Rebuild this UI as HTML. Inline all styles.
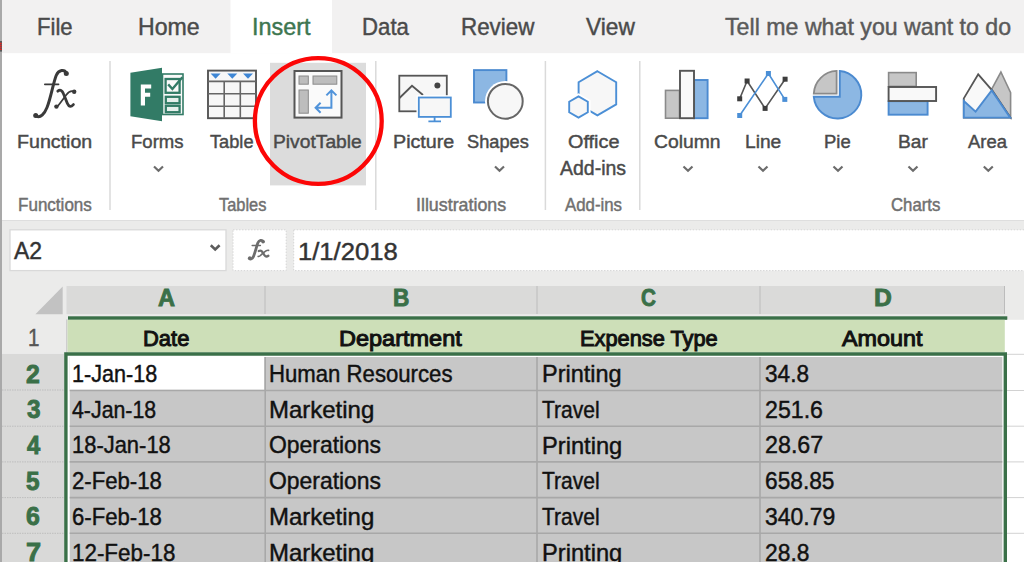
<!DOCTYPE html>
<html><head><meta charset="utf-8"><title>Excel Insert PivotTable</title>
<style>
html,body{margin:0;padding:0}
body{width:1024px;height:562px;overflow:hidden;position:relative;background:#fff;font-family:"Liberation Sans",sans-serif}
.a{position:absolute}
.t{position:absolute;white-space:nowrap;line-height:1;transform-origin:0 0;font-family:"Liberation Sans",sans-serif;-webkit-text-stroke:0.45px currentColor}
svg{position:absolute;left:0;top:0}
</style></head><body>
<svg width="1024" height="562" viewBox="0 0 1024 562">
  <!-- tab bar -->
  <rect x="0" y="0" width="1024" height="53.4" fill="#f2f1f1"/>
  <rect x="230.5" y="0" width="101.5" height="53.4" fill="#ffffff"/>
  <!-- ribbon -->
  <rect x="0" y="53.4" width="1024" height="166.6" fill="#ffffff"/>
  <rect x="270" y="62.8" width="96" height="122.6" fill="#dcdcdc"/>
  <g stroke="#dadada" stroke-width="1.5">
    <line x1="110" y1="61" x2="110" y2="210"/>
    <line x1="375.8" y1="61" x2="375.8" y2="210"/>
    <line x1="545.4" y1="61" x2="545.4" y2="210"/>
    <line x1="639.8" y1="61" x2="639.8" y2="210"/>
  </g>
  <!-- formula bar area -->
  <rect x="0" y="220" width="1024" height="100" fill="#ebebea"/>
  <line x1="0" y1="220.5" x2="1024" y2="220.5" stroke="#dedede" stroke-width="1"/>
  <rect x="10" y="229.8" width="216" height="40.8" fill="#fff" stroke="#d9d9d9" stroke-width="1.3"/>
  <rect x="233" y="229.8" width="53.2" height="40.8" fill="#fff" stroke="#d6d6d6" stroke-width="1" stroke-dasharray="1.5 1.5"/>
  <rect x="293.7" y="229.8" width="740" height="40.8" fill="#fff" stroke="#d6d6d6" stroke-width="1" stroke-dasharray="1.5 1.5"/>
  <path d="M210.8,245.3 L215.2,249.4 L219.6,245.3" fill="none" stroke="#5c5c5c" stroke-width="2.6"/>
  <!-- column headers -->
  <rect x="66.5" y="286" width="938" height="28.2" fill="#dadad9"/>
  <g stroke="#bcbcbc" stroke-width="1">
    <line x1="265" y1="286" x2="265" y2="314"/>
    <line x1="537" y1="286" x2="537" y2="314"/>
    <line x1="760" y1="286" x2="760" y2="314"/>
    <line x1="1004.5" y1="286" x2="1004.5" y2="314"/>
  </g>
  <polygon points="62.7,286.4 62.7,314.2 35.4,314.2" fill="#c2c2c2"/>
  <rect x="68" y="316.3" width="939.3" height="3.5" fill="#3a7048"/>
  <!-- row headers -->
  <rect x="0" y="319.5" width="66.5" height="34.4" fill="#ebebea"/>
  <rect x="0" y="353.9" width="64.3" height="210" fill="#d9d9d8"/>
  <g stroke="#bdbdbd" stroke-width="1" stroke-dasharray="1.5 1">
    <line x1="2" y1="390" x2="64" y2="390"/>
    <line x1="2" y1="426.2" x2="64" y2="426.2"/>
    <line x1="2" y1="461.9" x2="64" y2="461.9"/>
    <line x1="2" y1="497.6" x2="64" y2="497.6"/>
    <line x1="2" y1="533.3" x2="64" y2="533.3"/>
  </g>
  <line x1="66.9" y1="319.5" x2="66.9" y2="353" stroke="#b5b5b5" stroke-width="1"/>
  <!-- grid -->
  <rect x="67.5" y="319.8" width="937.3" height="32.4" fill="#cddfb8"/>
  <rect x="1007" y="319.8" width="17" height="243" fill="#fff"/>
  <g stroke="#d2d2d2" stroke-width="1">
    <line x1="1007" y1="354.3" x2="1024" y2="354.3"/>
    <line x1="1007" y1="390.5" x2="1024" y2="390.5"/>
    <line x1="1007" y1="426.2" x2="1024" y2="426.2"/>
    <line x1="1007" y1="461.9" x2="1024" y2="461.9"/>
    <line x1="1007" y1="497.6" x2="1024" y2="497.6"/>
    <line x1="1007" y1="533.3" x2="1024" y2="533.3"/>
  </g>
  <rect x="67.6" y="355.8" width="935" height="210" fill="#fff"/>
  <rect x="69.7" y="357" width="932.6" height="210" fill="#c7c7c7"/>
  <rect x="69.7" y="357" width="194.6" height="32.8" fill="#fff"/>
  <g stroke="#a8a8a8" stroke-width="1.6">
    <line x1="265.2" y1="357" x2="265.2" y2="562"/>
    <line x1="537" y1="357" x2="537" y2="562"/>
    <line x1="760" y1="357" x2="760" y2="562"/>
    <line x1="69.7" y1="390.5" x2="1002.3" y2="390.5"/>
    <line x1="69.7" y1="426.2" x2="1002.3" y2="426.2"/>
    <line x1="69.7" y1="461.9" x2="1002.3" y2="461.9"/>
    <line x1="69.7" y1="497.6" x2="1002.3" y2="497.6"/>
    <line x1="69.7" y1="533.3" x2="1002.3" y2="533.3"/>
  </g>
  <path d="M65.9,570 V354 H1005.3 V570" fill="none" stroke="#3a7048" stroke-width="3.4"/>
  <!-- left border -->
  <rect x="0" y="0" width="2" height="562" fill="#a9a9a9"/>
  <rect x="0" y="41" width="2" height="10.6" fill="#5a5a5a"/><g fill="#f02020"><rect x="0" y="42.8" width="1.6" height="1.2"/><rect x="0" y="44.8" width="1.6" height="1.2"/><rect x="0" y="46.8" width="1.6" height="1.2"/><rect x="0" y="48.8" width="1.6" height="1.2"/></g>

  <!-- ===== ICONS ===== -->
  <!-- Forms -->
  <g>
    <polygon points="130.4,72.8 162,67.8 162,121.2 130.4,116.2" fill="#327b66"/>
    <path d="M140.8,84.4 H151.2 V88.4 H145 V92.8 H150.2 V96.8 H145 V105.4 H140.8 Z" fill="#fff"/>
    <rect x="162.5" y="74" width="20.5" height="40.5" fill="#fafafa" stroke="#327b66" stroke-width="1.6"/>
    <rect x="165.6" y="79" width="14" height="13.8" fill="#fafafa" stroke="#327b66" stroke-width="2.3"/>
    <path d="M168.2,84.4 L172.4,89 L182.4,77.2" fill="none" stroke="#327b66" stroke-width="2.4"/>
    <rect x="165.8" y="96.8" width="13.8" height="6.4" fill="#e6efec" stroke="#327b66" stroke-width="2.3"/>
    <rect x="165.8" y="105.8" width="13.8" height="6.4" fill="#e6efec" stroke="#327b66" stroke-width="2.3"/>
  </g>
  <!-- Table -->
  <g>
    <rect x="208" y="70.6" width="48" height="47.6" fill="#f7f7f7" stroke="#555" stroke-width="1.9"/>
    <g stroke="#666" stroke-width="1.6">
      <line x1="208" y1="81.4" x2="256" y2="81.4"/>
      <line x1="208" y1="93.8" x2="256" y2="93.8"/>
      <line x1="208" y1="106.3" x2="256" y2="106.3"/>
      <line x1="224.2" y1="81.4" x2="224.2" y2="118"/>
      <line x1="240.3" y1="81.4" x2="240.3" y2="118"/>
    </g>
    <g fill="#3e86d4">
      <polygon points="210.6,73.6 220.6,73.6 215.6,78.8"/>
      <polygon points="227.3,73.6 237.3,73.6 232.3,78.8"/>
      <polygon points="243,73.6 253,73.6 248,78.8"/>
    </g>
  </g>
  <!-- PivotTable -->
  <g>
    <rect x="294.5" y="71" width="47" height="46.6" fill="#fafafa" stroke="#555" stroke-width="2"/>
    <rect x="299" y="76" width="9.3" height="8.2" fill="#bdbdbd" stroke="#8a8a8a" stroke-width="1"/>
    <rect x="313" y="76" width="23.8" height="8.2" fill="#bdbdbd" stroke="#8a8a8a" stroke-width="1"/>
    <rect x="299" y="90" width="9.3" height="23.2" fill="#bdbdbd" stroke="#8a8a8a" stroke-width="1"/>
    <path d="M315.6,107.8 H331.4 V90.4 M320.6,102.8 L315.6,107.8 L320.6,112.8 M326.4,95.4 L331.4,90.4 L336.4,95.4" fill="none" stroke="#5093da" stroke-width="2"/>
  </g>
  <!-- Picture -->
  <g>
    <rect x="399.3" y="75.7" width="47.5" height="35.6" fill="#f7f7f7" stroke="#555" stroke-width="1.8"/>
    <polyline points="399.5,98 412,85.8 423,95" fill="none" stroke="#555" stroke-width="1.8"/>
    <circle cx="437.4" cy="85.6" r="3" fill="#444"/>
    <rect x="416.5" y="95.2" width="36.6" height="24" fill="#fff"/>
    <rect x="418.8" y="97.5" width="32" height="19.4" fill="#f7f7f7" stroke="#4b8fd6" stroke-width="1.8"/>
    <path d="M434.6,117 V121.3 M428.4,121.3 H441" fill="none" stroke="#4b8fd6" stroke-width="1.8"/>
  </g>
  <!-- Shapes -->
  <g>
    <rect x="474" y="70.1" width="32.4" height="32.4" fill="#8cb7e3" stroke="#4b8ad0" stroke-width="1.9"/>
    <circle cx="505.3" cy="101.3" r="20.3" fill="#fff"/>
    <circle cx="505.3" cy="101.3" r="17.4" fill="#f7f7f7" stroke="#666" stroke-width="2"/>
  </g>
  <!-- Office Add-ins -->
  <g>
    <polygon points="597.4,71.2 616.2,82.2 616.2,104.4 597.4,115.4 578.6,104.4 578.6,82.2" fill="#f7f7f7" stroke="#4b8fd6" stroke-width="1.9"/>
    <polygon points="578.5,93.2 590.6,100.2 590.6,113.8 578.5,120.8 566.4,113.8 566.4,100.2" fill="#fff"/>
    <polygon points="578.5,96.4 587.8,101.8 587.8,112.2 578.5,117.6 569.2,112.2 569.2,101.8" fill="#f7f7f7" stroke="#4b8fd6" stroke-width="1.9"/>
  </g>
  <!-- Column -->
  <g>
    <rect x="665.5" y="90.4" width="14" height="27.8" fill="#c6c6c6" stroke="#8a8a8a" stroke-width="1.6"/>
    <rect x="694.1" y="80" width="13.5" height="38.2" fill="#8cb7e3" stroke="#4b8ad0" stroke-width="1.9"/>
    <rect x="680" y="70.8" width="14" height="47.4" fill="#f9f9f9" stroke="#555" stroke-width="1.9"/>
  </g>
  <!-- Line -->
  <g>
    <polyline points="739.7,98.8 747.1,81 765.1,108.4 785.1,79.2" fill="none" stroke="#555" stroke-width="1.6"/>
    <g fill="#3d3d3d">
      <rect x="737.2" y="96.3" width="5" height="5"/><rect x="744.6" y="78.5" width="5" height="5"/>
      <rect x="762.6" y="105.9" width="5" height="5"/><rect x="782.6" y="76.7" width="5" height="5"/>
    </g>
    <polyline points="739.7,115.5 768.4,73.5 784.8,99.4" fill="none" stroke="#4b8fd6" stroke-width="1.6"/>
    <g fill="#4b8fd6">
      <rect x="737.2" y="113" width="5" height="5"/><rect x="765.9" y="71" width="5" height="5"/><rect x="782.3" y="96.9" width="5" height="5"/>
    </g>
  </g>
  <!-- Pie -->
  <g>
    <path d="M836.6,93.6 L813.8,93.6 A23.8,23.8 0 0 1 836.6,70.9 Z" fill="#c6c6c6" stroke="#8a8a8a" stroke-width="1.8"/>
    <path d="M839.8,96.8 L839.8,71 A23.8,23.8 0 1 1 813.8,96.8 Z" fill="#8cb7e3" stroke="#4b8ad0" stroke-width="1.9"/>
  </g>
  <!-- Bar -->
  <g>
    <rect x="888.6" y="72.6" width="27.6" height="13.8" fill="#c6c6c6" stroke="#8a8a8a" stroke-width="1.6"/>
    <rect x="888.6" y="101.2" width="39" height="13.5" fill="#8cb7e3" stroke="#4b8ad0" stroke-width="1.9"/>
    <rect x="888.6" y="87" width="47.5" height="14" fill="#f9f9f9" stroke="#555" stroke-width="1.9"/>
  </g>
  <!-- Area -->
  <g>
    <polygon points="991.7,89.2 1000.9,72 1010.6,92.7 1010.6,117.6" fill="#c6c6c6" stroke="#8a8a8a" stroke-width="1.6"/>
    <polygon points="963.8,117.6 963.8,98.4 978.2,74.3 991.7,89.9 1010.4,117.6" fill="#f9f9f9" stroke="#555" stroke-width="1.8"/>
    <polygon points="963.8,101 975.6,111.6 991.7,90.4 1010.2,117.6 963.8,117.6" fill="#8cb7e3" stroke="#4b8ad0" stroke-width="1.9"/>
  </g>
  <!-- chevrons -->
  <g fill="none" stroke="#6c6c6c" stroke-width="2.2">
    <path d="M154.0,166.5 L158.5,170.7 L163.0,166.5"/>
    <path d="M495.0,166.5 L499.5,170.7 L504.0,166.5"/>
    <path d="M683.5,166.5 L688.0,170.7 L692.5,166.5"/>
    <path d="M758.5,166.5 L763.0,170.7 L767.5,166.5"/>
    <path d="M833.5,166.5 L838.0,170.7 L842.5,166.5"/>
    <path d="M908.5,166.5 L913.0,170.7 L917.5,166.5"/>
    <path d="M983.8,166.5 L988.3,170.7 L992.8,166.5"/>
  </g>
  <!-- red circle -->
  <ellipse cx="318.3" cy="121" rx="63.4" ry="62.9" fill="none" stroke="#fc0606" stroke-width="4.3"/>
</svg>
<svg width="1024" height="562" viewBox="0 0 1024 562" style="position:absolute;left:0;top:0">
  <g fill="none" stroke="#3a3a3a" stroke-linecap="round">
    <path d="M66.4,73 C64.5,69.2 58.8,69.4 56.2,75.5 C53.2,83 50.6,99 47,107.5 C44.6,113.5 40.6,118.2 36.4,116.2" stroke-width="3"/>
    <line x1="44.8" y1="84.4" x2="58.6" y2="84.4" stroke-width="1.6"/>
    <path d="M57.8,91.2 C60.2,89.2 62.2,90.2 63.6,94 L67.4,103.6 C68.9,107.2 71.2,107 73.4,104.6" stroke-width="2.8"/>
    <path d="M73.8,91.6 C71.2,90.4 69.2,91.2 66.2,95 L60.2,103 C58.4,105.6 57.2,106.8 56,106.8" stroke-width="1.7"/>
  </g>
  <g fill="#3a3a3a">
    <circle cx="66.3" cy="73.6" r="2.5"/><circle cx="35.7" cy="115.6" r="2.5"/>
    <circle cx="74.2" cy="91.8" r="2.2"/><circle cx="56.4" cy="106.6" r="2.2"/>
  </g>
</svg>
<svg width="1024" height="562" viewBox="0 0 1024 562" style="position:absolute;left:0;top:0">
  <g fill="none" stroke="#6c6c6c" stroke-linecap="round">
    <path d="M263.4,241.6 C262,239.6 259,240 257.8,243 C256.4,247 255,253 253.4,256.6 C252.4,258.8 250.6,259.6 249.2,258.4" stroke-width="2.8"/>
    <line x1="252.2" y1="245.6" x2="260.4" y2="245.6" stroke-width="1.5"/>
    <path d="M258.8,251 C260.4,250.2 261.6,250.6 262.6,252.4 L264.6,255.4 C265.6,256.8 267,256.8 268.4,255.8" stroke-width="2.3"/>
    <path d="M268.6,250.4 C267,250 266,250.6 264.2,252.2 L260.8,255.2 C259.8,256.2 258.8,256.6 258.2,256.4" stroke-width="1.6"/>
  </g>
  <g fill="#6c6c6c"><circle cx="263" cy="241.8" r="1.7"/><circle cx="249.8" cy="258" r="1.7"/></g>
</svg>
<span class="t" style="left:37.0px;top:15.3px;font-size:23.84px;color:#4a4a4a;transform:scaleX(0.926)">File</span>
<span class="t" style="left:137.9px;top:15.3px;font-size:23.84px;color:#4a4a4a;transform:scaleX(0.970)">Home</span>
<span class="t" style="left:251.6px;top:15.3px;font-size:23.84px;color:#3d7650;transform:scaleX(0.982)">Insert</span>
<span class="t" style="left:362.0px;top:15.3px;font-size:23.84px;color:#4a4a4a;transform:scaleX(0.932)">Data</span>
<span class="t" style="left:460.5px;top:15.3px;font-size:23.84px;color:#4a4a4a;transform:scaleX(0.939)">Review</span>
<span class="t" style="left:585.7px;top:15.3px;font-size:23.84px;color:#4a4a4a;transform:scaleX(0.953)">View</span>
<span class="t" style="left:724.8px;top:15.3px;font-size:23.84px;color:#5a5a5a;transform:scaleX(0.973)">Tell me what you want to do</span>
<span class="t" style="left:17.2px;top:131.8px;font-size:19.19px;color:#4a4a4a;transform:scaleX(1.022)">Function</span>
<span class="t" style="left:130.7px;top:131.8px;font-size:19.19px;color:#4a4a4a;transform:scaleX(0.967)">Forms</span>
<span class="t" style="left:210.4px;top:131.8px;font-size:19.19px;color:#4a4a4a;transform:scaleX(0.949)">Table</span>
<span class="t" style="left:273.2px;top:131.8px;font-size:19.19px;color:#4a4a4a;transform:scaleX(1.003)">PivotTable</span>
<span class="t" style="left:392.7px;top:131.8px;font-size:19.19px;color:#4a4a4a;transform:scaleX(1.027)">Picture</span>
<span class="t" style="left:467.0px;top:131.8px;font-size:19.19px;color:#4a4a4a;transform:scaleX(0.949)">Shapes</span>
<span class="t" style="left:567.5px;top:131.8px;font-size:19.19px;color:#4a4a4a;transform:scaleX(1.035)">Office</span>
<span class="t" style="left:653.8px;top:131.8px;font-size:19.19px;color:#4a4a4a;transform:scaleX(1.007)">Column</span>
<span class="t" style="left:744.7px;top:131.8px;font-size:19.19px;color:#4a4a4a;transform:scaleX(0.999)">Line</span>
<span class="t" style="left:823.7px;top:131.8px;font-size:19.19px;color:#4a4a4a;transform:scaleX(0.962)">Pie</span>
<span class="t" style="left:897.7px;top:131.8px;font-size:19.19px;color:#4a4a4a;transform:scaleX(0.999)">Bar</span>
<span class="t" style="left:967.7px;top:131.8px;font-size:19.19px;color:#4a4a4a;transform:scaleX(0.961)">Area</span>
<span class="t" style="left:560.2px;top:158.9px;font-size:19.62px;color:#4a4a4a;transform:scaleX(0.993)">Add-ins</span>
<span class="t" style="left:17.9px;top:197.2px;font-size:17.44px;color:#707070;transform:scaleX(0.977)">Functions</span>
<span class="t" style="left:219.4px;top:197.2px;font-size:17.44px;color:#707070;transform:scaleX(0.939)">Tables</span>
<span class="t" style="left:415.6px;top:197.2px;font-size:17.44px;color:#707070;transform:scaleX(1.022)">Illustrations</span>
<span class="t" style="left:564.8px;top:197.2px;font-size:17.44px;color:#707070;transform:scaleX(0.964)">Add-ins</span>
<span class="t" style="left:890.9px;top:197.2px;font-size:17.44px;color:#707070;transform:scaleX(0.961)">Charts</span>
<span class="t" style="left:14.3px;top:238.7px;font-size:23.98px;color:#333;transform:scaleX(0.957)">A2</span>
<span class="t" style="left:298.0px;top:240.1px;font-size:24.06px;color:#333;transform:scaleX(1.065)">1/1/2018</span>
<span class="t" style="left:158.3px;top:286.0px;font-size:24.27px;color:#3a7048;font-weight:bold;-webkit-text-stroke:0.9px currentColor;transform:scaleX(0.971)">A</span>
<span class="t" style="left:392.8px;top:286.0px;font-size:24.27px;color:#3a7048;font-weight:bold;-webkit-text-stroke:0.9px currentColor;transform:scaleX(0.934)">B</span>
<span class="t" style="left:640.9px;top:286.0px;font-size:24.27px;color:#3a7048;font-weight:bold;-webkit-text-stroke:0.9px currentColor;transform:scaleX(0.850)">C</span>
<span class="t" style="left:873.7px;top:286.0px;font-size:24.27px;color:#3a7048;font-weight:bold;-webkit-text-stroke:0.9px currentColor;transform:scaleX(1.016)">D</span>
<span class="t" style="left:143.2px;top:327.7px;font-size:22.24px;color:#111;-webkit-text-stroke:1.0px currentColor;transform:scaleX(0.987)">Date</span>
<span class="t" style="left:339.3px;top:327.7px;font-size:22.24px;color:#111;-webkit-text-stroke:1.0px currentColor;transform:scaleX(1.057)">Department</span>
<span class="t" style="left:580.0px;top:327.7px;font-size:22.24px;color:#111;-webkit-text-stroke:1.0px currentColor;transform:scaleX(0.980)">Expense Type</span>
<span class="t" style="left:841.8px;top:327.7px;font-size:22.24px;color:#111;-webkit-text-stroke:1.0px currentColor;transform:scaleX(1.050)">Amount</span>
<span class="t" style="left:27.8px;top:325.6px;font-size:24.71px;color:#555;transform:scaleX(0.833)">1</span>
<span class="t" style="left:72.2px;top:362.0px;font-size:24.27px;color:#111;transform:scaleX(0.890)">1-Jan-18</span>
<span class="t" style="left:268.9px;top:362.0px;font-size:24.27px;color:#111;transform:scaleX(0.913)">Human Resources</span>
<span class="t" style="left:541.6px;top:362.2px;font-size:24.27px;color:#111;transform:scaleX(0.968)">Printing</span>
<span class="t" style="left:764.6px;top:362.0px;font-size:24.27px;color:#111;transform:scaleX(0.931)">34.8</span>
<span class="t" style="left:26.4px;top:360.5px;font-size:26.02px;color:#3a7048;font-weight:bold;-webkit-text-stroke:0.9px currentColor;transform:scaleX(0.955)">2</span>
<span class="t" style="left:72.2px;top:397.7px;font-size:24.27px;color:#111;transform:scaleX(0.879)">4-Jan-18</span>
<span class="t" style="left:268.9px;top:397.7px;font-size:24.27px;color:#111;transform:scaleX(0.988)">Marketing</span>
<span class="t" style="left:541.6px;top:397.9px;font-size:24.27px;color:#111;transform:scaleX(0.868)">Travel</span>
<span class="t" style="left:764.6px;top:397.7px;font-size:24.27px;color:#111;transform:scaleX(0.955)">251.6</span>
<span class="t" style="left:26.7px;top:396.2px;font-size:26.02px;color:#3a7048;font-weight:bold;-webkit-text-stroke:0.9px currentColor;transform:scaleX(0.936)">3</span>
<span class="t" style="left:72.2px;top:433.4px;font-size:24.27px;color:#111;transform:scaleX(0.904)">18-Jan-18</span>
<span class="t" style="left:268.9px;top:433.4px;font-size:24.27px;color:#111;transform:scaleX(0.944)">Operations</span>
<span class="t" style="left:541.6px;top:433.6px;font-size:24.27px;color:#111;transform:scaleX(0.975)">Printing</span>
<span class="t" style="left:764.6px;top:433.4px;font-size:24.27px;color:#111;transform:scaleX(0.959)">28.67</span>
<span class="t" style="left:27.0px;top:431.9px;font-size:26.02px;color:#3a7048;font-weight:bold;-webkit-text-stroke:0.9px currentColor;transform:scaleX(0.911)">4</span>
<span class="t" style="left:72.2px;top:469.1px;font-size:24.27px;color:#111;transform:scaleX(0.913)">2-Feb-18</span>
<span class="t" style="left:268.9px;top:469.1px;font-size:24.27px;color:#111;transform:scaleX(0.944)">Operations</span>
<span class="t" style="left:541.6px;top:469.3px;font-size:24.27px;color:#111;transform:scaleX(0.868)">Travel</span>
<span class="t" style="left:764.6px;top:469.1px;font-size:24.27px;color:#111;transform:scaleX(0.936)">658.85</span>
<span class="t" style="left:26.4px;top:467.6px;font-size:26.02px;color:#3a7048;font-weight:bold;-webkit-text-stroke:0.9px currentColor;transform:scaleX(0.936)">5</span>
<span class="t" style="left:72.2px;top:504.8px;font-size:24.27px;color:#111;transform:scaleX(0.913)">6-Feb-18</span>
<span class="t" style="left:268.9px;top:504.8px;font-size:24.27px;color:#111;transform:scaleX(0.988)">Marketing</span>
<span class="t" style="left:541.6px;top:505.0px;font-size:24.27px;color:#111;transform:scaleX(0.868)">Travel</span>
<span class="t" style="left:764.6px;top:504.8px;font-size:24.27px;color:#111;transform:scaleX(0.946)">340.79</span>
<span class="t" style="left:26.4px;top:503.3px;font-size:26.02px;color:#3a7048;font-weight:bold;-webkit-text-stroke:0.9px currentColor;transform:scaleX(0.955)">6</span>
<span class="t" style="left:72.2px;top:540.5px;font-size:24.27px;color:#111;transform:scaleX(0.923)">12-Feb-18</span>
<span class="t" style="left:268.9px;top:540.5px;font-size:24.27px;color:#111;transform:scaleX(0.988)">Marketing</span>
<span class="t" style="left:541.6px;top:540.7px;font-size:24.27px;color:#111;transform:scaleX(0.975)">Printing</span>
<span class="t" style="left:764.6px;top:540.5px;font-size:24.27px;color:#111;transform:scaleX(0.941)">28.8</span>
<span class="t" style="left:26.1px;top:539.0px;font-size:26.02px;color:#3a7048;font-weight:bold;-webkit-text-stroke:0.9px currentColor;transform:scaleX(1.044)">7</span>
</body></html>
